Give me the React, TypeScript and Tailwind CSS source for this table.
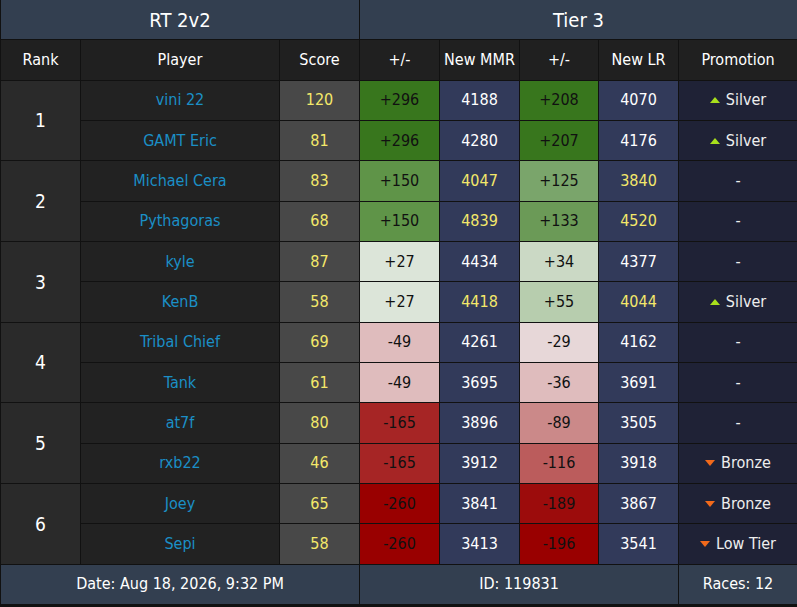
import React from "react";

type Row = {
  name: string;
  score: number;
  d1: string;
  d1bg: string;
  mmr: number;
  mmrY?: boolean;
  d2: string;
  d2bg: string;
  lr: number;
  lrY?: boolean;
  promo?: { dir: "up" | "down"; label: string };
};

const groups: { rank: number; rows: Row[] }[] = [
  {
    rank: 1,
    rows: [
      { name: "vini 22", score: 120, d1: "+296", d1bg: "bg-[#38761d]", mmr: 4188, d2: "+208", d2bg: "bg-[#38761d]", lr: 4070, promo: { dir: "up", label: "Silver" } },
      { name: "GAMT Eric", score: 81, d1: "+296", d1bg: "bg-[#38761d]", mmr: 4280, d2: "+207", d2bg: "bg-[#38761d]", lr: 4176, promo: { dir: "up", label: "Silver" } },
    ],
  },
  {
    rank: 2,
    rows: [
      { name: "Michael Cera", score: 83, d1: "+150", d1bg: "bg-[#5f9448]", mmr: 4047, mmrY: true, d2: "+125", d2bg: "bg-[#7aa56b]", lr: 3840, lrY: true },
      { name: "Pythagoras", score: 68, d1: "+150", d1bg: "bg-[#5f9448]", mmr: 4839, mmrY: true, d2: "+133", d2bg: "bg-[#6b9a57]", lr: 4520, lrY: true },
    ],
  },
  {
    rank: 3,
    rows: [
      { name: "kyle", score: 87, d1: "+27", d1bg: "bg-[#dce5d9]", mmr: 4434, d2: "+34", d2bg: "bg-[#cbd9c5]", lr: 4377 },
      { name: "KenB", score: 58, d1: "+27", d1bg: "bg-[#dce5d9]", mmr: 4418, mmrY: true, d2: "+55", d2bg: "bg-[#b7cdae]", lr: 4044, lrY: true, promo: { dir: "up", label: "Silver" } },
    ],
  },
  {
    rank: 4,
    rows: [
      { name: "Tribal Chief", score: 69, d1: "-49", d1bg: "bg-[#dfbcbd]", mmr: 4261, d2: "-29", d2bg: "bg-[#e7d7d8]", lr: 4162 },
      { name: "Tank", score: 61, d1: "-49", d1bg: "bg-[#dfbcbd]", mmr: 3695, d2: "-36", d2bg: "bg-[#dfbcbd]", lr: 3691 },
    ],
  },
  {
    rank: 5,
    rows: [
      { name: "at7f", score: 80, d1: "-165", d1bg: "bg-[#a62525]", mmr: 3896, d2: "-89", d2bg: "bg-[#cb8989]", lr: 3505 },
      { name: "rxb22", score: 46, d1: "-165", d1bg: "bg-[#a62525]", mmr: 3912, d2: "-116", d2bg: "bg-[#bb5c5c]", lr: 3918, promo: { dir: "down", label: "Bronze" } },
    ],
  },
  {
    rank: 6,
    rows: [
      { name: "Joey", score: 65, d1: "-260", d1bg: "bg-[#990000]", mmr: 3841, d2: "-189", d2bg: "bg-[#9c0c0c]", lr: 3867, promo: { dir: "down", label: "Bronze" } },
      { name: "Sepi", score: 58, d1: "-260", d1bg: "bg-[#990000]", mmr: 3413, d2: "-196", d2bg: "bg-[#990000]", lr: 3541, promo: { dir: "down", label: "Low Tier" } },
    ],
  },
];

const cell = "flex items-center justify-center";
const font = { fontFamily: '"DejaVu Sans Condensed", "Liberation Sans Narrow", "Roboto", sans-serif' };

function Promo({ p }: { p?: Row["promo"] }) {
  if (!p) return <span>-</span>;
  return (
    <span className="flex items-center gap-[6px]">
      {p.dir === "up" ? (
        <svg width="10" height="6" viewBox="0 0 10 6"><polygon points="5,0 10,6 0,6" fill="#a8e01c" /></svg>
      ) : (
        <svg width="10" height="6" viewBox="0 0 10 6"><polygon points="0,0 10,0 5,6" fill="#f26a1b" /></svg>
      )}
      <span>{p.label}</span>
    </span>
  );
}

export default function App() {
  return (
    <div className="w-[797px] h-[607px] bg-[#111111] overflow-hidden" style={font}>
      <div className="grid h-[604px] gap-px pl-px grid-cols-[79px_198px_79px_79px_79px_78px_79px_118px] grid-rows-[repeat(15,minmax(0,1fr))] text-[16px] text-[#f0f0f0]">
        <div className={`${cell} col-span-3 bg-[#333f50] text-[20px] text-white`}>RT 2v2</div>
        <div className={`${cell} col-span-5 bg-[#333f50] text-[20px] text-white`}>Tier 3</div>
        {["Rank", "Player", "Score", "+/-", "New MMR", "+/-", "New LR", "Promotion"].map((h, i) => (
          <div key={i} className={`${cell} bg-[#202020] text-white`}>{h}</div>
        ))}
        {groups.map((g) => (
          <React.Fragment key={g.rank}>
            {g.rows.map((r, i) => (
              <React.Fragment key={r.name}>
                {i === 0 && (
                  <div className={`${cell} row-span-2 bg-[#2a2a2a] text-[19px] text-white`}>{g.rank}</div>
                )}
                <div className={`${cell} bg-[#222222] text-[#1b8fc6]`}>{r.name}</div>
                <div className={`${cell} bg-[#484848] text-[#f4e86a]`}>{r.score}</div>
                <div className={`${cell} ${r.d1bg} text-[#111111]`}>{r.d1}</div>
                <div className={`${cell} bg-[#323a5a] ${r.mmrY ? "text-[#f4e86a]" : "text-white"}`}>{r.mmr}</div>
                <div className={`${cell} ${r.d2bg} text-[#111111]`}>{r.d2}</div>
                <div className={`${cell} bg-[#323a5a] ${r.lrY ? "text-[#f4e86a]" : "text-white"}`}>{r.lr}</div>
                <div className={`${cell} bg-[#1f2236] text-[#eeeeee]`}><Promo p={r.promo} /></div>
              </React.Fragment>
            ))}
          </React.Fragment>
        ))}
        <div className={`${cell} col-span-3 bg-[#333f50] text-white`}>Date: Aug 18, 2026, 9:32 PM</div>
        <div className={`${cell} col-span-4 bg-[#333f50] text-white`}>ID: 119831</div>
        <div className={`${cell} bg-[#333f50] text-white`}>Races: 12</div>
      </div>
    </div>
  );
}
